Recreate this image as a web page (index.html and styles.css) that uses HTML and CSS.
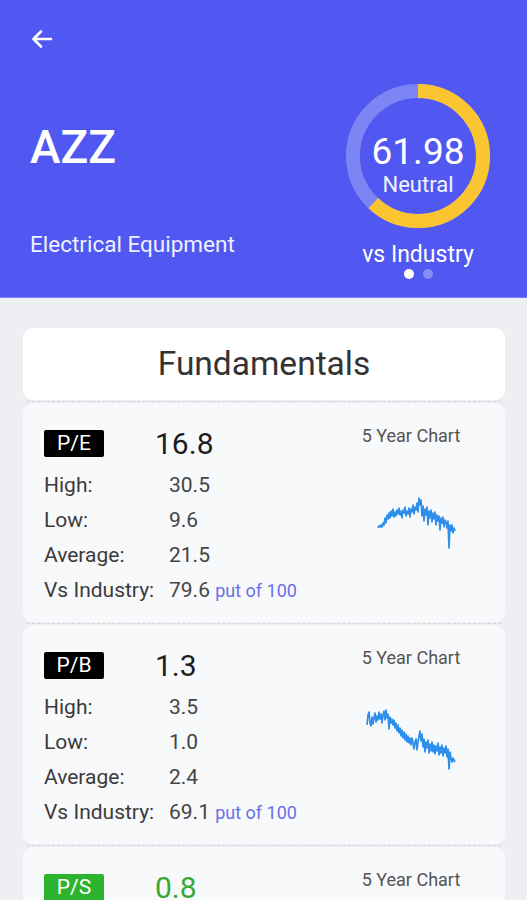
FILE: index.html
```html
<!DOCTYPE html>
<html lang="en">
<head>
<meta charset="utf-8">
<title>AZZ Fundamentals</title>
<link rel="stylesheet" href="styles.css">
</head>
<body>
<header class="hero">
  <svg class="back" width="24" height="24" viewBox="0 0 24 24" aria-label="Back">
    <path d="M21 12H4M11 4.5L3.5 12 11 19.5" fill="none" stroke="#fff" stroke-width="2.6" stroke-linecap="round" stroke-linejoin="round"/>
  </svg>
  <div class="hero-row">
    <div class="hero-left">
      <h1 class="ticker">AZZ</h1>
      <p class="sector">Electrical Equipment</p>
    </div>
    <div class="hero-right">
      <div class="gauge">
        <svg width="144" height="144" viewBox="0 0 144 144">
          <circle cx="72" cy="72" r="65" fill="none" stroke="#7C85F3" stroke-width="14"/>
          <circle cx="72" cy="72" r="65" fill="none" stroke="#FBC531" stroke-width="14" stroke-dasharray="253.1 500" transform="rotate(-90 72 72)"/>
        </svg>
        <div class="gauge-text">
          <span class="score">61.98</span>
          <span class="verdict">Neutral</span>
        </div>
      </div>
      <div class="vs">vs Industry</div>
      <div class="dots"><span class="dot on"></span><span class="dot"></span></div>
    </div>
  </div>
</header>

<main class="content">
  <section class="title-card"><h2>Fundamentals</h2></section>
  <div class="sep"></div>

  <section class="card">
    <div class="metrics">
      <div class="metric-head">
        <span class="badge">P/E</span>
        <span class="big">16.8</span>
      </div>
      <dl class="rows">
        <dt>High:</dt><dd>30.5</dd>
        <dt>Low:</dt><dd>9.6</dd>
        <dt>Average:</dt><dd>21.5</dd>
        <dt>Vs Industry:</dt><dd>79.6 <span class="outof">put of 100</span></dd>
      </dl>
    </div>
    <div class="chart">
      <div class="chart-title">5 Year Chart</div>
      <svg class="spark" width="120" height="70" viewBox="0 0 120 70">
        <polyline fill="none" stroke="#2F8EEA" stroke-width="1.7" stroke-linejoin="round" points="27,45 28,43 29,44 30,42 31,44 32,40 33,42 34,35 35,40 36,32 37,36 38,30 39,35 40,28 41,33 42,26 43,34 44,29 45,33 46,27 47,31 48,25 49,32 50,28 51,35 52,27 53,30 54,24 55,33 56,28 57,31 58,25 59,34 60,26 61,29 62,22 63,31 64,24 65,27 66,20 67,29 68,15 69,22 70,17 71,33 72,23 73,38 74,26 75,32 76,24 77,42 78,28 79,35 80,27 81,39 82,30 83,36 84,29 85,42 86,32 87,38 88,33 89,47 90,35 91,40 92,34 93,44 94,37 95,39 96,45 97,38 98,65 99,42 100,48 101,42 102,50 103,45 104,48"/>
      </svg>
    </div>
  </section>
  <div class="sep"></div>

  <section class="card">
    <div class="metrics">
      <div class="metric-head">
        <span class="badge">P/B</span>
        <span class="big">1.3</span>
      </div>
      <dl class="rows">
        <dt>High:</dt><dd>3.5</dd>
        <dt>Low:</dt><dd>1.0</dd>
        <dt>Average:</dt><dd>2.4</dd>
        <dt>Vs Industry:</dt><dd>69.1 <span class="outof">put of 100</span></dd>
      </dl>
    </div>
    <div class="chart">
      <div class="chart-title">5 Year Chart</div>
      <svg class="spark" width="120" height="70" viewBox="0 0 120 70">
        <polyline fill="none" stroke="#2F8EEA" stroke-width="1.7" stroke-linejoin="round" points="16,20 17,10 18,7 19,18 20,21 21,12 22,19 23,13 24,8 25,17 26,11 27,15 28,7 29,14 30,9 31,18 32,10 33,6 34,15 35,5 36,13 37,9 38,24 39,12 40,18 41,14 42,20 43,15 44,23 45,18 46,26 47,20 48,28 49,23 50,31 51,25 52,33 53,27 54,35 55,29 56,37 57,31 58,38 59,33 60,40 61,33 62,38 63,44 64,37 65,34 66,45 67,37 68,31 69,26 70,36 71,29 72,42 73,34 74,47 75,37 76,43 77,35 78,48 79,39 80,46 81,37 82,47 83,40 84,49 85,41 86,46 87,38 88,50 89,42 90,48 91,40 92,51 93,43 94,48 95,41 96,52 97,44 98,64 99,47 100,53 101,57 102,53 104,57"/>
      </svg>
    </div>
  </section>
  <div class="sep"></div>

  <section class="card">
    <div class="metrics">
      <div class="metric-head">
        <span class="badge green">P/S</span>
        <span class="big green-text">0.8</span>
      </div>
    </div>
    <div class="chart">
      <div class="chart-title">5 Year Chart</div>
    </div>
  </section>
</main>
</body>
</html>
```

FILE: styles.css
```css
* { box-sizing: border-box; }

body {
  margin: 0;
  background: #EEEFF3;
  font-family: Roboto, "Liberation Sans", Arial, sans-serif;
  color: #333;
}

.hero {
  height: 298px;
  background: #5158F1;
  border-bottom: 1px solid #7A80F4;
  padding: 27px 37px 0 30px;
  color: #fff;
}

.back { display: block; }

.hero-row {
  display: flex;
  justify-content: space-between;
  margin-top: 33px;
}

.hero-left { padding-top: 40px; }

.ticker {
  margin: 0;
  font-size: 46px;
  line-height: 46px;
  font-weight: 500;
}

.sector {
  margin: 63px 0 0;
  font-size: 22.5px;
  line-height: 22px;
  color: #EEF0FF;
}

.hero-right {
  width: 144px;
  display: flex;
  flex-direction: column;
  align-items: center;
}

.gauge {
  position: relative;
  width: 144px;
  height: 144px;
}

.gauge svg { display: block; }

.gauge-text {
  position: absolute;
  inset: 0;
  display: flex;
  flex-direction: column;
  align-items: center;
  padding-top: 49px;
}

.score {
  font-size: 37px;
  line-height: 38px;
}

.verdict {
  margin-top: 2px;
  font-size: 22px;
  line-height: 24px;
  color: #F2F3FF;
}

.vs {
  margin-top: 15px;
  font-size: 23px;
  line-height: 23px;
  white-space: nowrap;
}

.dots {
  display: flex;
  gap: 9px;
  margin-top: 3px;
}

.dot {
  width: 10px;
  height: 10px;
  border-radius: 50%;
  background: #858DF5;
}

.dot.on { background: #fff; }

.content {
  padding: 30px 22px 0 23px;
  display: flex;
  flex-direction: column;
  gap: 1px;
}

.title-card {
  background: #fff;
  border-radius: 10px;
  height: 72px;
}

.title-card h2 {
  margin: 0;
  text-align: center;
  font-size: 33.5px;
  line-height: 72px;
  font-weight: 400;
  color: #333;
}

.sep {
  height: 1px;
  margin: 0 4px;
  border-top: 1px dashed #D4D5DA;
}

.card {
  background: #F8F9FB;
  border-radius: 10px;
  padding: 22px 34px 14px 21px;
  display: flex;
  justify-content: space-between;
  min-height: 219px;
}

.metrics { padding-top: 5px; }

.metric-head {
  display: flex;
  align-items: center;
  height: 27px;
}

.badge {
  width: 60px;
  height: 27px;
  border-radius: 2px;
  background: #000;
  color: #fff;
  font-size: 21px;
  line-height: 27px;
  text-align: center;
}

.badge.green { background: #2DB42F; }

.big {
  margin-left: 51px;
  font-size: 30px;
  line-height: 30px;
  color: #1d1d1d;
}

.green-text { color: #39A935; }

.rows {
  margin: 11px 0 0;
  display: grid;
  grid-template-columns: 125px auto;
  font-size: 21px;
  line-height: 35px;
}

.rows dt { color: #3b3b3b; }

.rows dd {
  margin: 0;
  color: #444;
  white-space: nowrap;
}

.outof {
  font-size: 18px;
  color: #6A6FE6;
}

.chart {
  width: 120px;
  display: flex;
  flex-direction: column;
  align-items: center;
}

.chart-title {
  font-size: 18px;
  line-height: 21px;
  color: #555;
  white-space: nowrap;
}

.spark {
  display: block;
  margin-top: 37px;
}
```
